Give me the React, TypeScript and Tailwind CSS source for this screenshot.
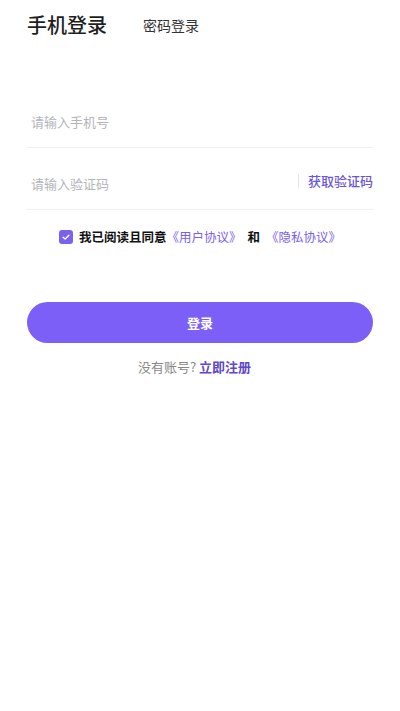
import { useState } from 'react';

const font = { fontFamily: '"Noto Sans CJK SC", "Noto Sans", sans-serif' };

export default function App() {
  const [agreed, setAgreed] = useState(true);

  return (
    <div className="min-h-[711px] w-[400px] bg-white px-[27px]" style={font}>
      {/* 标签切换 */}
      <div className="flex items-end gap-[36px] pt-[10px]">
        <span className="text-[20px] leading-[30px] font-medium text-[#1f1f1f]">手机登录</span>
        <span className="mb-[3px] text-[14px] leading-[24px] text-[#333]">密码登录</span>
      </div>

      {/* 表单 */}
      <div className="mt-[56px]">
        <div className="flex h-[52px] items-center border-b border-[#f0f0f0] pl-[4px]">
          <input
            className="w-full bg-transparent text-[13px] text-[#333] outline-none placeholder:text-[#b4b4bc]"
            placeholder="请输入手机号"
          />
        </div>
        <div className="mt-[10px] flex h-[52px] items-center border-b border-[#f0f0f0] pl-[4px]">
          <input
            className="min-w-0 flex-1 bg-transparent text-[13px] text-[#333] outline-none placeholder:text-[#b4b4bc]"
            placeholder="请输入验证码"
          />
          <span className="mb-[6px] h-[14px] w-px bg-[#e4e4e8]" />
          <button className="mb-[6px] pl-[9px] text-[13px] font-medium text-[#6a55d6]">获取验证码</button>
        </div>
      </div>

      {/* 协议 */}
      <div className="mt-[17px] flex h-[20px] items-center justify-center text-[12.5px] font-bold">
        <button
          onClick={() => setAgreed(!agreed)}
          className={`mr-[6px] flex h-[14px] w-[14px] items-center justify-center rounded-[3px] ${agreed ? 'bg-[#7a62ec]' : 'border border-[#ccc]'}`}
        >
          {agreed && (
            <svg viewBox="0 0 12 12" className="h-[10px] w-[10px]" fill="none" stroke="white" strokeWidth="1.6" strokeLinecap="round" strokeLinejoin="round">
              <path d="M2.5 6.2 L5 8.5 L9.5 3.8" />
            </svg>
          )}
        </button>
        <span className="text-[#111]">我已阅读且同意</span>
        <span className="font-normal text-[#7a62ec]">《用户协议》</span>
        <span className="mx-[6px] text-[#111]">和</span>
        <span className="font-normal text-[#7a62ec]">《隐私协议》</span>
      </div>

      {/* 登录按钮 */}
      <button className="mt-[55px] flex h-[41px] w-full items-center justify-center rounded-full bg-[#7b5ff6] text-[13px] font-bold text-white">
        登录
      </button>

      <div className="mt-[14px] pr-[11px] text-center text-[13px] text-[#888]">
        没有账号? <span className="font-bold text-[#5d48c8]">立即注册</span>
      </div>
    </div>
  );
}
